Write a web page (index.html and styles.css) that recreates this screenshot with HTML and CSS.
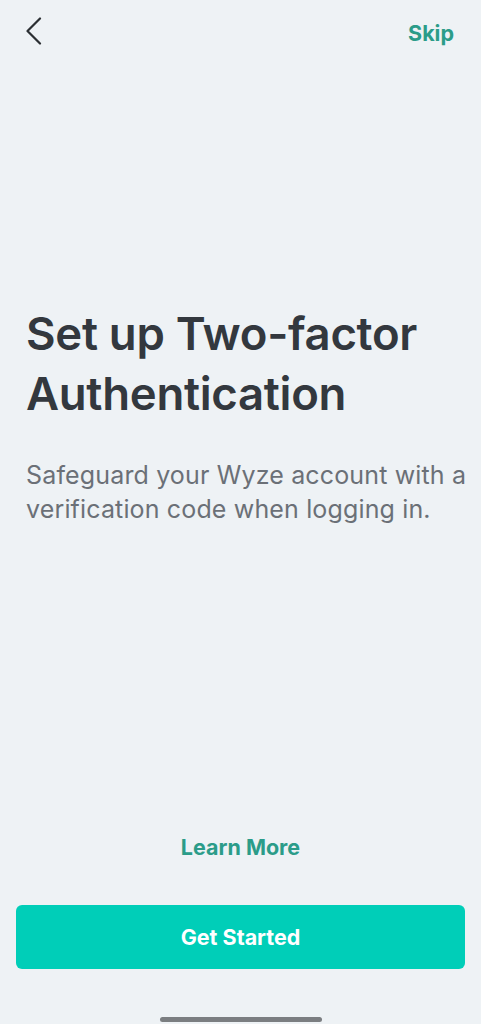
FILE: index.html
```html
<!DOCTYPE html>
<html>
<head>
<meta charset="utf-8">
<link rel="stylesheet" href="styles.css">
</head>
<body>
<div class="screen">
  <header class="topbar">
    <button class="back" aria-label="Back">
      <svg width="16" height="28" viewBox="0 0 16 28"><path d="M14 1.5 L1.5 14 L14 26.5" fill="none" stroke="#2b2f33" stroke-width="2.2" stroke-linecap="round" stroke-linejoin="round"/></svg>
    </button>
    <a class="skip">Skip</a>
  </header>
  <main class="content">
    <h1 class="title">Set up Two-factor Authentication</h1>
    <p class="desc">Safeguard your Wyze account with a verification code when logging in.</p>
  </main>
  <footer class="actions">
    <a class="learn">Learn More</a>
    <button class="primary">Get Started</button>
    <div class="home-indicator"></div>
  </footer>
</div>
</body>
</html>
```
FILE: styles.css
```css
* { box-sizing: border-box; }
html, body { margin: 0; padding: 0; }
body {
  background: #eef2f5;
  font-family: "Inter", "Liberation Sans", sans-serif;
  color: #33383e;
}
.screen {
  height: 1024px;
  display: flex;
  flex-direction: column;
}
.topbar {
  display: flex;
  justify-content: space-between;
  padding: 17px 27px 0 26px;
  height: 60px;
  align-items: flex-start;
}
.back {
  background: none;
  border: 0;
  padding: 0;
  width: 16px;
  height: 28px;
  display: block;
}
.back svg { display: block; }
.skip {
  font-weight: 700;
  font-size: 21.5px;
  color: #2b9c89;
  line-height: 24px;
  margin-top: 4px;
}
.content {
  flex: 1;
  padding: 244px 4px 0 26px;
}
.title {
  margin: 0;
  font-size: 45.5px;
  font-weight: 600;
  line-height: 60px;
  color: #33383e;
  letter-spacing: -0.3px;
}
.desc {
  margin: 34px 0 0;
  font-size: 25px;
  line-height: 34px;
  color: #6b7077;
  letter-spacing: 0.15px;
}
.actions {
  display: flex;
  flex-direction: column;
  align-items: center;
  padding: 0 16px;
}
.learn {
  font-weight: 700;
  font-size: 21.5px;
  line-height: 28px;
  color: #2b9c89;
  margin-bottom: 44px;
}
.primary {
  width: 100%;
  height: 64px;
  border: 0;
  border-radius: 6px;
  background: #00ceb8;
  color: #ffffff;
  font-family: "Inter", "Liberation Sans", sans-serif;
  font-weight: 700;
  font-size: 21.5px;
}
.home-indicator {
  width: 162px;
  height: 5px;
  border-radius: 3px;
  background: #7b7e81;
  margin: 48px 0 2px;
}
```
